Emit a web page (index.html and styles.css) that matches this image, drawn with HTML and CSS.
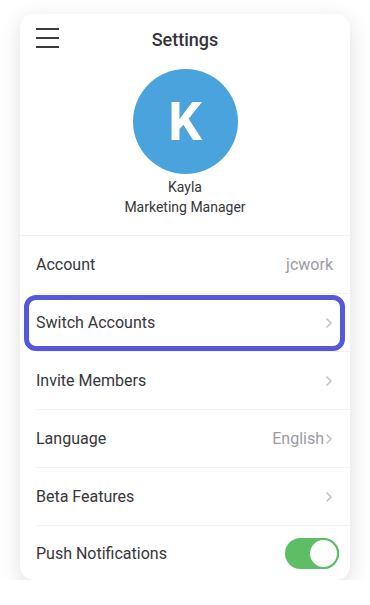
FILE: index.html
```html
<!DOCTYPE html>
<html lang="en">
<head>
    <meta charset="UTF-8">
    <meta name="viewport" content="width=device-width, initial-scale=1.0">
    <title>Settings</title>
    <link rel="stylesheet" href="styles.css">
</head>
<body>

    <div class="card">
        <div class="header">
            <div class="menu">
                <span></span><span></span><span></span>
            </div>
            <h2>Settings</h2>
        </div>

        <div class="profile">
            <div class="avatar">K</div>
            <div class="name">Kayla</div>
            <div class="role">Marketing Manager</div>
        </div>

        <ul class="list">
            <li class="row">
                <span class="label">Account</span>
                <span class="value">jcwork</span>
            </li>
            <li class="row selected">
                <span class="label">Switch Accounts</span>
                <svg class="chevron" viewBox="0 0 8 12"><path d="M1.5 1.5L6 6l-4.5 4.5"/></svg>
            </li>
            <li class="row">
                <span class="label">Invite Members</span>
                <svg class="chevron" viewBox="0 0 8 12"><path d="M1.5 1.5L6 6l-4.5 4.5"/></svg>
            </li>
            <li class="row">
                <span class="label">Language</span>
                <span class="value">English<svg class="chevron" viewBox="0 0 8 12"><path d="M1.5 1.5L6 6l-4.5 4.5"/></svg></span>
            </li>
            <li class="row">
                <span class="label">Beta Features</span>
                <svg class="chevron" viewBox="0 0 8 12"><path d="M1.5 1.5L6 6l-4.5 4.5"/></svg>
            </li>
            <li class="row last">
                <span class="label">Push Notifications</span>
                <div class="toggle"><span class="knob"></span></div>
            </li>
        </ul>
    </div>

</body>
</html>
```

FILE: styles.css
```css
body {
    margin: 0;
    background: #ffffff;
    font-family: Roboto, "Liberation Sans", Arial, sans-serif;
    color: #36363b;
}
.card {
    width: 330px;
    margin: 14px 0 0 20px;
    background: #fff;
    border-radius: 14px;
    box-shadow: 0 6px 22px rgba(0, 0, 0, 0.13);
    overflow: hidden;
}
.header {
    position: relative;
    height: 50px;
    display: flex;
    align-items: center;
    justify-content: center;
}
.header h2 {
    margin: 0;
    font-size: 18px;
    font-weight: 500;
    color: #333338;
}
.menu {
    position: absolute;
    left: 16px;
    top: 14px;
    width: 23px;
    display: flex;
    flex-direction: column;
    gap: 7px;
}
.menu span {
    display: block;
    height: 2px;
    background: #3a3a3f;
}
.profile {
    display: flex;
    flex-direction: column;
    align-items: center;
    padding-top: 5px;
    height: 172px;
    box-sizing: border-box;
    border-bottom: 1px solid #f1f1f3;
}
.avatar {
    width: 105px;
    height: 105px;
    border-radius: 50%;
    background: #4ba3dd;
    color: #fff;
    font-size: 53px;
    font-weight: 700;
    display: flex;
    align-items: center;
    justify-content: center;
}
.name, .role {
    font-size: 14px;
    line-height: 20px;
    color: #36363b;
}
.name {
    margin-top: 3px;
}
.list {
    list-style: none;
    margin: 0;
    padding: 0;
}
.row {
    position: relative;
    height: 57px;
    margin-left: 16px;
    padding-right: 17px;
    display: flex;
    align-items: center;
    justify-content: space-between;
    border-bottom: 1px solid #f3f3f5;
}
.row.last {
    border-bottom: none;
    height: 54px;
    padding-right: 11px;
}
.row.selected::after {
    content: "";
    position: absolute;
    left: -12px;
    right: 5px;
    top: 1px;
    bottom: 0;
    border: 5px solid #5558dc;
    border-radius: 12px;
}
.label {
    font-size: 16px;
    color: #36363b;
}
.value {
    font-size: 16px;
    color: #9c9ca5;
    display: flex;
    align-items: center;
}
.chevron {
    width: 8px;
    height: 12px;
    fill: none;
    stroke: #c3c3c7;
    stroke-width: 1.5;
}
.value .chevron {
    margin-left: 1px;
}
.toggle {
    width: 54px;
    height: 31px;
    border-radius: 16px;
    background: #5ebe65;
    position: relative;
}
.toggle .knob {
    position: absolute;
    right: 0;
    top: 0;
    width: 27px;
    height: 27px;
    border-radius: 50%;
    background: #fff;
    border: 2px solid #5ebe65;
}
```
